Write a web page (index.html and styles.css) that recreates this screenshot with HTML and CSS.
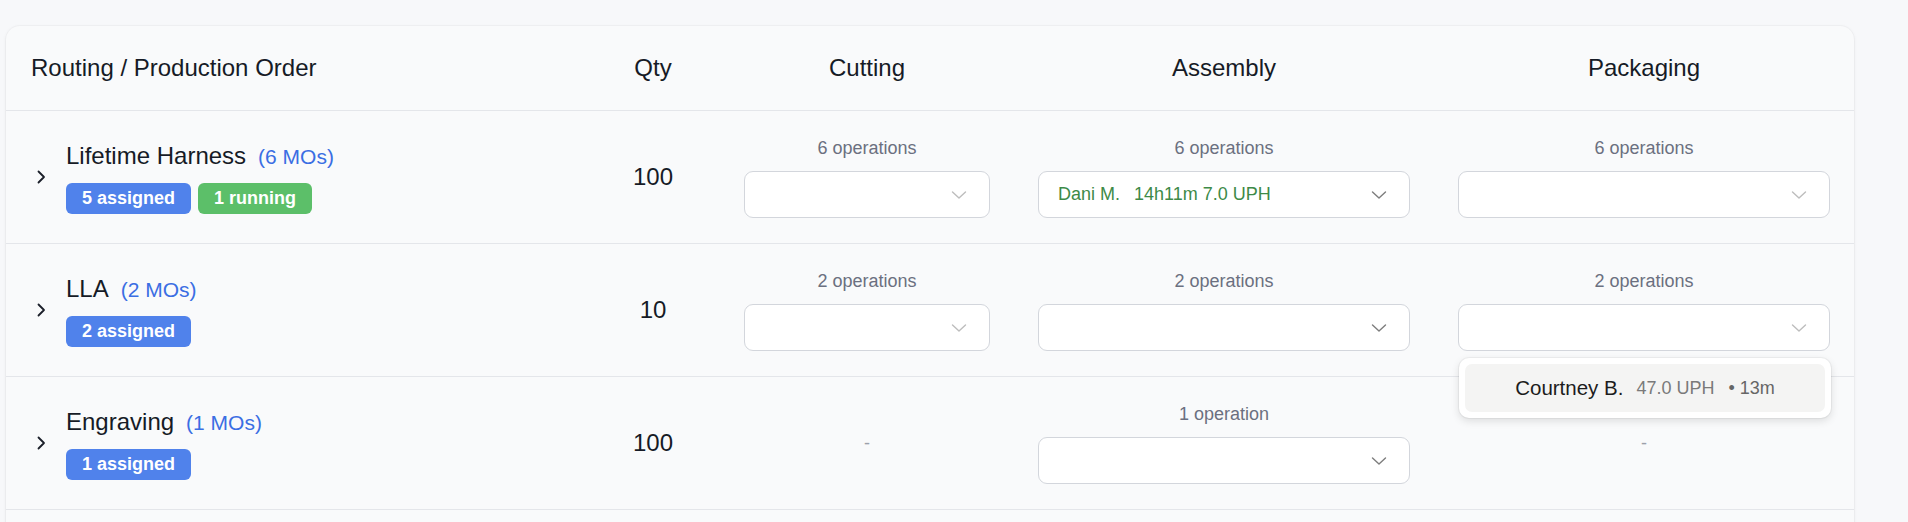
FILE: index.html
```html
<!DOCTYPE html>
<html lang="en">
<head>
<meta charset="utf-8">
<title>Routing</title>
<link rel="stylesheet" href="styles.css">
</head>
<body>
<div class="page">
  <div class="card">
    <div class="row head">
      <div class="cell name-head">Routing / Production Order</div>
      <div class="cell center">Qty</div>
      <div class="cell center">Cutting</div>
      <div class="cell center">Assembly</div>
      <div class="cell center">Packaging</div>
    </div>

    <div class="row">
      <div class="cell order">
        <svg class="expander" width="20" height="20" viewBox="0 0 20 20"><path d="M7.5 4.5 L13 10 L7.5 15.5"/></svg>
        <div class="order-info">
          <div class="order-title"><span class="order-name">Lifetime Harness</span><span class="mo-count">(6 MOs)</span></div>
          <div class="badges"><span class="badge blue">5 assigned</span><span class="badge green">1 running</span></div>
        </div>
      </div>
      <div class="cell qty">100</div>
      <div class="cell stage">
        <div class="ops">6 operations</div>
        <div class="select"><span class="value"></span><svg class="caret" width="16" height="16" viewBox="0 0 16 16"><path d="M1.5 5 L8 11 L14.5 5"/></svg></div>
      </div>
      <div class="cell stage">
        <div class="ops">6 operations</div>
        <div class="select filled"><span class="value"><span class="who">Dani M.</span><span>14h11m 7.0 UPH</span></span><svg class="caret dark" width="16" height="16" viewBox="0 0 16 16"><path d="M1.5 5 L8 11 L14.5 5"/></svg></div>
      </div>
      <div class="cell stage">
        <div class="ops">6 operations</div>
        <div class="select"><span class="value"></span><svg class="caret" width="16" height="16" viewBox="0 0 16 16"><path d="M1.5 5 L8 11 L14.5 5"/></svg></div>
      </div>
    </div>

    <div class="row">
      <div class="cell order">
        <svg class="expander" width="20" height="20" viewBox="0 0 20 20"><path d="M7.5 4.5 L13 10 L7.5 15.5"/></svg>
        <div class="order-info">
          <div class="order-title"><span class="order-name">LLA</span><span class="mo-count">(2 MOs)</span></div>
          <div class="badges"><span class="badge blue">2 assigned</span></div>
        </div>
      </div>
      <div class="cell qty">10</div>
      <div class="cell stage">
        <div class="ops">2 operations</div>
        <div class="select"><span class="value"></span><svg class="caret" width="16" height="16" viewBox="0 0 16 16"><path d="M1.5 5 L8 11 L14.5 5"/></svg></div>
      </div>
      <div class="cell stage">
        <div class="ops">2 operations</div>
        <div class="select"><span class="value"></span><svg class="caret dark" width="16" height="16" viewBox="0 0 16 16"><path d="M1.5 5 L8 11 L14.5 5"/></svg></div>
      </div>
      <div class="cell stage">
        <div class="ops">2 operations</div>
        <div class="select-wrap">
          <div class="select open"><span class="value"></span><svg class="caret" width="16" height="16" viewBox="0 0 16 16"><path d="M1.5 5 L8 11 L14.5 5"/></svg></div>
          <div class="menu">
            <div class="menu-item"><span class="opt-name">Courtney B.</span><span class="opt-rate">47.0 UPH</span><span class="opt-time">• 13m</span></div>
          </div>
        </div>
      </div>
    </div>

    <div class="row">
      <div class="cell order">
        <svg class="expander" width="20" height="20" viewBox="0 0 20 20"><path d="M7.5 4.5 L13 10 L7.5 15.5"/></svg>
        <div class="order-info">
          <div class="order-title"><span class="order-name">Engraving</span><span class="mo-count">(1 MOs)</span></div>
          <div class="badges"><span class="badge blue">1 assigned</span></div>
        </div>
      </div>
      <div class="cell qty">100</div>
      <div class="cell stage"><div class="none">-</div></div>
      <div class="cell stage">
        <div class="ops">1 operation</div>
        <div class="select"><span class="value"></span><svg class="caret dark" width="16" height="16" viewBox="0 0 16 16"><path d="M1.5 5 L8 11 L14.5 5"/></svg></div>
      </div>
      <div class="cell stage"><div class="none">-</div></div>
    </div>

    <div class="row spacer"></div>
  </div>
</div>
</body>
</html>
```

FILE: styles.css
```css
* { box-sizing: border-box; }

html, body {
  margin: 0;
  padding: 0;
  background: #f7f8fa;
  font-family: "Liberation Sans", Arial, Helvetica, sans-serif;
  color: #161b26;
  overflow: hidden;
}

.page {
  padding: 26px 54px 0 6px;
}

.card {
  width: 1848px;
  background: #f9fafb;
  border-radius: 14px;
  box-shadow: 0 0 0 1px rgba(0, 0, 0, 0.025), 0 1px 4px rgba(0, 0, 0, 0.06);
}

.row {
  display: grid;
  grid-template-columns: 580px 134px 294px 420px 420px;
  height: 133px;
  border-bottom: 1px solid #e4e6ea;
}

.row.head {
  height: 85px;
  font-size: 24px;
  color: #161b26;
}

.row.spacer {
  border-bottom: none;
}

.cell {
  display: flex;
  align-items: center;
  min-width: 0;
}

.cell.center {
  justify-content: center;
}

.name-head {
  padding-left: 25px;
}

.order {
  padding-left: 25px;
}

.expander {
  flex: none;
  margin-right: 15px;
}

.expander path {
  fill: none;
  stroke: #1b1f29;
  stroke-width: 1.8;
  stroke-linecap: round;
  stroke-linejoin: round;
}

.order-info {
  display: flex;
  flex-direction: column;
  gap: 8px;
}

.order-title {
  line-height: 32px;
  white-space: nowrap;
}

.order-name {
  font-size: 24px;
  color: #161b26;
}

.mo-count {
  font-size: 21px;
  color: #3b6ee3;
  margin-left: 12px;
}

.badges {
  display: flex;
  gap: 7px;
}

.badge {
  height: 31px;
  line-height: 31px;
  padding: 0 16px;
  border-radius: 6px;
  font-size: 18px;
  font-weight: bold;
  color: #ffffff;
  white-space: nowrap;
}

.badge.blue { background: #5082eb; }
.badge.green { background: #5cbf69; }

.qty {
  justify-content: center;
  font-size: 24px;
  color: #161b26;
}

.stage {
  flex-direction: column;
  justify-content: center;
  align-items: stretch;
  padding: 0 24px;
}

.ops {
  text-align: center;
  font-size: 18px;
  line-height: 24px;
  color: #6b7080;
  margin-bottom: 11px;
}

.none {
  text-align: center;
  font-size: 18px;
  color: #9ca0aa;
}

.select-wrap {
  position: relative;
}

.select {
  height: 47px;
  background: #ffffff;
  border: 1px solid #d3d6dc;
  border-radius: 9px;
  display: flex;
  align-items: center;
  justify-content: space-between;
  padding: 0 22px 0 19px;
}

.value {
  display: flex;
  gap: 14px;
  font-size: 18px;
  color: #3d8a47;
  white-space: nowrap;
}

.caret {
  flex: none;
}

.caret path {
  fill: none;
  stroke: #bdbdbd;
  stroke-width: 1.4;
  stroke-linecap: round;
  stroke-linejoin: round;
}

.caret.dark path {
  stroke: #7d7d7d;
}

.menu {
  position: absolute;
  top: calc(100% + 7px);
  left: 1px;
  right: -1px;
  z-index: 5;
  background: #ffffff;
  border-radius: 10px;
  padding: 6px;
  box-shadow: 0 0 0 1px rgba(0, 0, 0, 0.04), 0 3px 8px rgba(0, 0, 0, 0.12);
}

.menu-item {
  height: 48px;
  border-radius: 7px;
  background: #f4f4f3;
  display: flex;
  align-items: center;
  justify-content: center;
  white-space: nowrap;
}

.opt-name {
  font-size: 20.5px;
  color: #1c1c1c;
}

.opt-rate {
  font-size: 18px;
  color: #7a7a7a;
  margin-left: 13px;
}

.opt-time {
  font-size: 18px;
  color: #666666;
  margin-left: 14px;
}
```
